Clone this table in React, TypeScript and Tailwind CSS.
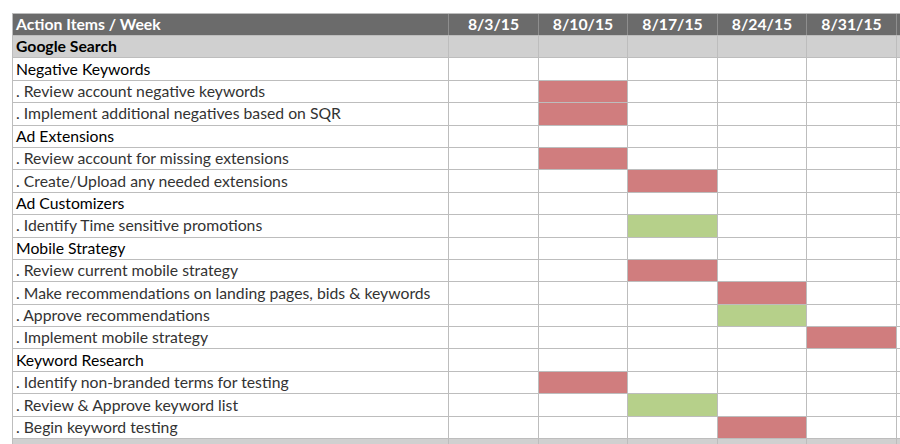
import React from 'react';

type Kind = 'group' | 'section' | 'item';

interface Row {
  label: string;
  kind: Kind;
  red?: number;
  green?: number;
}

const weeks = ['8/3/15', '8/10/15', '8/17/15', '8/24/15', '8/31/15', ''];

const rows: Row[] = [
  { label: 'Google Search', kind: 'group' },
  { label: 'Negative Keywords', kind: 'section' },
  { label: '. Review account negative keywords', kind: 'item', red: 1 },
  { label: '. Implement additional negatives based on SQR', kind: 'item', red: 1 },
  { label: 'Ad Extensions', kind: 'section' },
  { label: '. Review account for missing extensions', kind: 'item', red: 1 },
  { label: '. Create/Upload any needed extensions', kind: 'item', red: 2 },
  { label: 'Ad Customizers', kind: 'section' },
  { label: '. Identify Time sensitive promotions', kind: 'item', green: 2 },
  { label: 'Mobile Strategy', kind: 'section' },
  { label: '. Review current mobile strategy', kind: 'item', red: 2 },
  { label: '. Make recommendations on landing pages, bids & keywords', kind: 'item', red: 3 },
  { label: '. Approve recommendations', kind: 'item', green: 3 },
  { label: '. Implement mobile strategy', kind: 'item', red: 4 },
  { label: 'Keyword Research', kind: 'section' },
  { label: '. Identify non-branded terms for testing', kind: 'item', red: 1 },
  { label: '. Review & Approve keyword list', kind: 'item', green: 2 },
  { label: '. Begin keyword testing', kind: 'item', red: 3 },
  { label: 'Google Display', kind: 'group' },
];

const gridCols = 'grid grid-cols-[436px_90px_89px_90px_89px_90px_40px]';

export default function App() {
  return (
    <div className="w-[900px] h-[444px] overflow-hidden bg-white pt-[13px] pl-[12px] font-['Lato','Open_Sans',sans-serif] text-[15.75px]">
      <div className="w-[924px] border-t border-l border-[#bdbdbd]">
        {/* Header */}
        <div className={`${gridCols} h-[21px] bg-[#6b6b6b] text-white font-bold`}>
          <div className="flex items-center pl-[3px] pb-[1px] border-r border-[#8e8e8e] leading-none">Action Items / Week</div>
          {weeks.map((w, i) => (
            <div key={i} className="flex items-center justify-center pb-[1px] border-r border-[#8e8e8e] leading-none">
              {w}
            </div>
          ))}
        </div>

        {rows.map((r, idx) => (
          <div
            key={idx}
            className={`${gridCols} h-[22.4px] border-t border-[#bdbdbd] ${r.kind === 'group' ? 'bg-[#d0d0d0]' : 'bg-white'}`}
          >
            <div
              className={`flex items-center pl-[3px] pb-[1px] border-r border-[#bdbdbd] leading-none whitespace-nowrap ${
                r.kind === 'group' ? 'font-bold text-black' : r.kind === 'section' ? 'text-black' : 'text-[#333333]'
              }`}
            >
              {r.label}
            </div>
            {weeks.map((_, i) => (
              <div
                key={i}
                className={`border-r border-[#bdbdbd] ${
                  r.red === i ? 'bg-[#d07d7e]' : r.green === i ? 'bg-[#b6d08a]' : ''
                }`}
              />
            ))}
          </div>
        ))}
      </div>
    </div>
  );
}
